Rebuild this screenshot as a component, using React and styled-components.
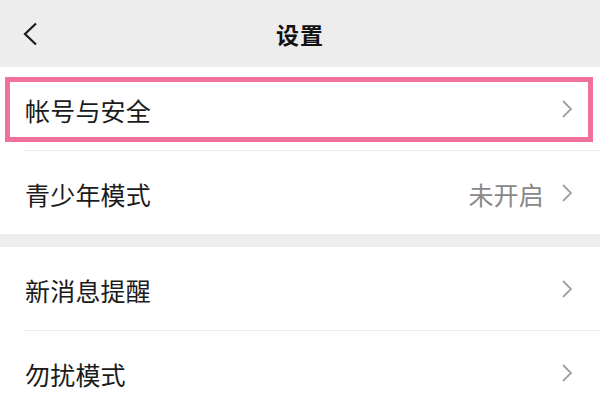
import React from "react";
import styled, { createGlobalStyle } from "styled-components";

const GlobalStyle = createGlobalStyle`
  html, body {
    margin: 0;
    padding: 0;
    background: #ededed;
  }
  body {
    font-family: "Noto Sans CJK SC", "Noto Sans", sans-serif;
  }
`;

const Page = styled.div`
  width: 600px;
  height: 400px;
  overflow: hidden;
  background: #ededed;
`;

const Header = styled.header`
  height: 67px;
  display: grid;
  grid-template-columns: 60px 1fr 60px;
  align-items: center;
  background: #ededed;
`;

const BackButton = styled.div`
  display: flex;
  align-items: center;
  padding-left: 22px;
`;

const Title = styled.h1`
  margin: 0;
  text-align: center;
  font-size: 23px;
  font-weight: 700;
  color: #111;
  letter-spacing: 1px;
`;

const Section = styled.section`
  background: #fff;
  margin-bottom: ${(props) => (props.gap ? "13px" : "0")};
`;

const Row = styled.div`
  position: relative;
  height: ${(props) => props.height || 83}px;
  display: flex;
  align-items: center;
  padding: 3px 27px 0 25px;
  box-sizing: border-box;
  border-bottom: ${(props) => (props.last ? "none" : "1px solid transparent")};

  &::after {
    content: "";
    display: ${(props) => (props.last ? "none" : "block")};
    position: absolute;
    left: 24px;
    right: 0;
    bottom: -1px;
    height: 1px;
    background: #ececec;
  }
`;

const Label = styled.span`
  flex: 1;
  font-size: 25px;
  color: #1b1b1b;
  letter-spacing: 0.2px;
`;

const Value = styled.span`
  font-size: 25px;
  color: #888;
  margin-right: 17px;
  letter-spacing: 0.2px;
`;

const Highlight = styled.div`
  position: absolute;
  top: 10px;
  left: 5px;
  right: 7px;
  bottom: 8px;
  border: 5px solid #f07199;
  pointer-events: none;
`;

const ChevronBox = styled.span`
  display: flex;
  margin-top: -3px;
`;

const Chevron = () => (
  <ChevronBox>
    <svg width="12" height="20" viewBox="0 0 12 20">
      <polyline
        points="2,2 10,10 2,18"
        fill="none"
        stroke="#a0a0a0"
        strokeWidth="1.8"
      />
    </svg>
  </ChevronBox>
);

const BackIcon = () => (
  <svg width="16" height="24" viewBox="0 0 16 24">
    <polyline
      points="14,1.5 3,12 14,22.5"
      fill="none"
      stroke="#1b1b1b"
      strokeWidth="2.2"
    />
  </svg>
);

const SettingRow = ({ label, value, highlight, last, height }) => (
  <Row last={last} height={height}>
    <Label>{label}</Label>
    {value && <Value>{value}</Value>}
    <Chevron />
    {highlight && <Highlight />}
  </Row>
);

const App = () => {
  return (
    <Page>
      <GlobalStyle />
      <Header>
        <BackButton>
          <BackIcon />
        </BackButton>
        <Title>设置</Title>
        <div />
      </Header>
      <Section gap>
        <SettingRow label="帐号与安全" highlight height={84} />
        <SettingRow label="青少年模式" value="未开启" last />
      </Section>
      <Section>
        <SettingRow label="新消息提醒" height={84} />
        <SettingRow label="勿扰模式" last />
      </Section>
    </Page>
  );
};

export default App;
